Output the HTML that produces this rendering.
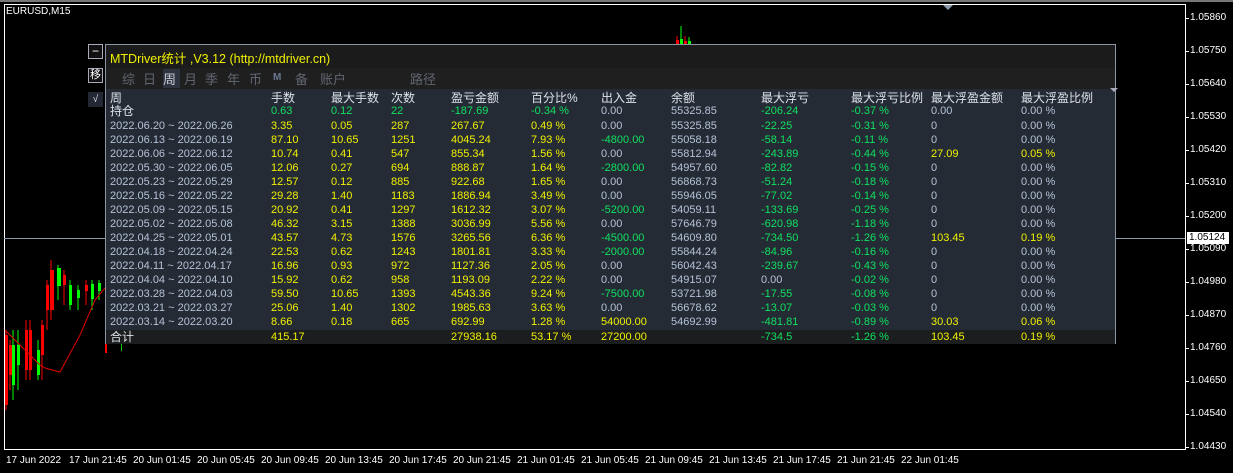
<!DOCTYPE html>
<html><head><meta charset="utf-8"><style>
*{margin:0;padding:0;box-sizing:border-box}
body{width:1233px;height:473px;background:#000;position:relative;overflow:hidden;font-family:"Liberation Sans","Noto Sans CJK SC",sans-serif;font-size:11px}
.a{position:absolute;white-space:nowrap}
.px{color:#fff;font-size:10px;left:1190px}
.tk{position:absolute;left:1185px;width:4px;height:1px;background:#fff}
.tm{color:#fff;font-size:10px;top:455px}
.r{position:absolute;left:0;width:1010px;height:13px;line-height:13px}
.r span{position:absolute;top:0}
.w{color:#b4c2d6}.y{color:#f0f000}.g{color:#10e060}.h{color:#dde3ea;font-size:12px}
.tb{position:absolute;top:24px;color:#606670;font-size:13px}
</style></head><body>
<div class="a" style="left:0;top:0;width:1233px;height:2px;background:#777"></div>
<div class="a" style="left:4px;top:4px;width:1182px;height:1px;background:#fff"></div>
<div class="a" style="left:4px;top:4px;width:1px;height:446px;background:#fff"></div>
<div class="a" style="left:1185px;top:4px;width:1px;height:446px;background:#fff"></div>
<div class="a" style="left:4px;top:449px;width:1182px;height:1px;background:#fff"></div>
<div class="a" style="left:4px;top:238px;width:1181px;height:1px;background:#8a9aaa"></div>
<div class="a" style="left:6px;top:6px;color:#fff;font-size:10px">EURUSD,M15</div>
<div class="a" style="left:943px;top:5px;width:0;height:0;border-left:5px solid transparent;border-right:5px solid transparent;border-top:5px solid #8a9aaa"></div>
<div class="tk" style="top:18px"></div><div class="a px" style="top:12px">1.05860</div>
<div class="tk" style="top:51px"></div><div class="a px" style="top:45px">1.05750</div>
<div class="tk" style="top:84px"></div><div class="a px" style="top:78px">1.05640</div>
<div class="tk" style="top:117px"></div><div class="a px" style="top:111px">1.05530</div>
<div class="tk" style="top:150px"></div><div class="a px" style="top:144px">1.05420</div>
<div class="tk" style="top:183px"></div><div class="a px" style="top:177px">1.05310</div>
<div class="tk" style="top:216px"></div><div class="a px" style="top:210px">1.05200</div>
<div class="tk" style="top:249px"></div><div class="a px" style="top:243px">1.05090</div>
<div class="a" style="left:1187px;top:232px;width:42px;height:12px;background:#fff;color:#000;font-size:10px;padding-left:2px;line-height:12px">1.05124</div>
<div class="tk" style="top:282px"></div><div class="a px" style="top:276px">1.04980</div>
<div class="tk" style="top:315px"></div><div class="a px" style="top:309px">1.04870</div>
<div class="tk" style="top:348px"></div><div class="a px" style="top:342px">1.04760</div>
<div class="tk" style="top:381px"></div><div class="a px" style="top:375px">1.04650</div>
<div class="tk" style="top:414px"></div><div class="a px" style="top:408px">1.04540</div>
<div class="tk" style="top:447px"></div><div class="a px" style="top:441px">1.04430</div>
<div class="a tm" style="left:6px">17 Jun 2022</div>
<div class="a tm" style="left:69px">17 Jun 21:45</div>
<div class="a tm" style="left:133px">20 Jun 01:45</div>
<div class="a tm" style="left:197px">20 Jun 05:45</div>
<div class="a tm" style="left:261px">20 Jun 09:45</div>
<div class="a tm" style="left:325px">20 Jun 13:45</div>
<div class="a tm" style="left:389px">20 Jun 17:45</div>
<div class="a tm" style="left:453px">20 Jun 21:45</div>
<div class="a tm" style="left:517px">21 Jun 01:45</div>
<div class="a tm" style="left:581px">21 Jun 05:45</div>
<div class="a tm" style="left:645px">21 Jun 09:45</div>
<div class="a tm" style="left:709px">21 Jun 13:45</div>
<div class="a tm" style="left:773px">21 Jun 17:45</div>
<div class="a tm" style="left:837px">21 Jun 21:45</div>
<div class="a tm" style="left:901px">22 Jun 01:45</div>
<svg class="a" style="left:0;top:0" width="110" height="450">
<line x1="6" y1="330" x2="6" y2="410" stroke="#f00"/><rect x="5" y="335" width="3" height="70" fill="#f00"/>
<line x1="10" y1="340" x2="10" y2="390" stroke="#f00"/><rect x="9" y="345" width="3" height="30" fill="#f00"/>
<line x1="13" y1="330" x2="13" y2="400" stroke="#0f0"/><rect x="12" y="345" width="3" height="40" fill="#0f0"/>
<line x1="18" y1="330" x2="18" y2="390" stroke="#0f0"/><rect x="17" y="345" width="3" height="20" fill="#0f0"/>
<line x1="26" y1="320" x2="26" y2="380" stroke="#f00"/><rect x="25" y="330" width="3" height="40" fill="#f00"/>
<line x1="30" y1="320" x2="30" y2="380" stroke="#f00"/><rect x="29" y="330" width="3" height="40" fill="#f00"/>
<line x1="38" y1="340" x2="38" y2="380" stroke="#0f0"/><rect x="37" y="350" width="3" height="25" fill="#0f0"/>
<line x1="42" y1="320" x2="42" y2="380" stroke="#f00"/><rect x="41" y="325" width="3" height="30" fill="#f00"/>
<line x1="47" y1="280" x2="47" y2="330" stroke="#f00"/><rect x="46" y="285" width="3" height="25" fill="#f00"/>
<line x1="51" y1="260" x2="51" y2="320" stroke="#f00"/><rect x="50" y="270" width="4" height="40" fill="#f00"/>
<line x1="58" y1="265" x2="58" y2="300" stroke="#0f0"/><rect x="57" y="268" width="4" height="18" fill="#0f0"/>
<line x1="64" y1="270" x2="64" y2="305" stroke="#f00"/><rect x="63" y="275" width="3" height="10" fill="#f00"/>
<line x1="70" y1="280" x2="70" y2="310" stroke="#0f0"/><rect x="69" y="285" width="3" height="20" fill="#0f0"/>
<line x1="78" y1="285" x2="78" y2="310" stroke="#0f0"/><rect x="77" y="290" width="3" height="8" fill="#0f0"/>
<line x1="86" y1="280" x2="86" y2="305" stroke="#f00"/><rect x="85" y="285" width="3" height="6" fill="#f00"/>
<line x1="92" y1="280" x2="92" y2="310" stroke="#0f0"/><rect x="91" y="284" width="3" height="15" fill="#0f0"/>
<line x1="99" y1="280" x2="99" y2="300" stroke="#0f0"/><rect x="98" y="283" width="3" height="8" fill="#0f0"/>
<polyline points="5,330 20,345 40,365 45,368 60,372 80,335 95,300 105,288" fill="none" stroke="#d00" stroke-width="1"/>
</svg>
<div class="a" style="left:105px;top:343px;width:2px;height:10px;background:#f00"></div>
<div class="a" style="left:121px;top:343px;width:1px;height:8px;background:#0c0"></div>
<svg class="a" style="left:670px;top:22px" width="30" height="23">
<line x1="11" y1="4" x2="11" y2="22" stroke="#0f0"/><rect x="10" y="17" width="3" height="6" fill="#0f0"/>
<line x1="7" y1="14" x2="7" y2="22" stroke="#f00"/><rect x="6" y="18" width="3" height="5" fill="#f00"/>
<line x1="15" y1="14" x2="15" y2="22" stroke="#f00"/><rect x="14" y="19" width="3" height="4" fill="#f00"/>
<line x1="19" y1="15" x2="19" y2="22" stroke="#0f0"/><rect x="18" y="19" width="3" height="4" fill="#0f0"/>
</svg>
<div class="a" style="left:88px;top:44px;width:15px;height:15px;border:1px solid #aab;background:#111;color:#fff;text-align:center;line-height:12px;font-size:12px">−</div>
<div class="a" style="left:88px;top:68px;width:15px;height:15px;border:1px solid #aab;background:#111;color:#fff;text-align:center;line-height:13px;font-size:11px">移</div>
<div class="a" style="left:88px;top:92px;width:15px;height:15px;background:#222833;color:#dde;text-align:center;line-height:15px;font-size:10px">√</div>
<div class="a" style="left:105px;top:44px;width:1011px;height:300px;border:1px solid #8a96a4;background:#252b35">
 <div class="a" style="left:0;top:0;width:1009px;height:23px;background:#1b1b1b"></div>
 <div class="a" style="left:0;top:23px;width:1009px;height:21px;background:#1f1f20"></div>
 <div class="a" style="left:4px;top:3px;color:#f0f000;font-size:12.5px">MTDriver统计 ,V3.12 (http://mtdriver.cn)</div>
 <div class="a" style="left:57px;top:24px;width:17px;height:19px;background:#2d3440"></div>
 <div class="tb" style="left:16px">综</div>
 <div class="tb" style="left:37px">日</div>
 <div class="tb" style="left:57px;color:#c8ccd4">周</div>
 <div class="tb" style="left:78px">月</div>
 <div class="tb" style="left:99px">季</div>
 <div class="tb" style="left:121px">年</div>
 <div class="tb" style="left:143px">币</div>
 <div class="tb" style="left:167px;font-size:10px;top:27px;color:#6a7890;font-weight:bold">M</div>
 <div class="tb" style="left:189px">备</div>
 <div class="tb" style="left:214px">账户</div>
 <div class="tb" style="left:304px">路径</div>
 <div class="a" style="left:1004px;top:43px;width:0;height:0;border-left:4px solid transparent;border-right:4px solid transparent;border-top:4px solid #aab"></div>
 <div class="a" style="left:0;top:285px;width:1009px;height:14px;background:#1c1d1f"></div>
</div>
<div class="a" style="left:105px;top:92px;width:1011px">
<div class="r h" style="top:0"><span style="left:5px">周</span><span style="left:166px">手数</span><span style="left:226px">最大手数</span><span style="left:286px">次数</span><span style="left:346px">盈亏金额</span><span style="left:426px">百分比%</span><span style="left:496px">出入金</span><span style="left:566px">余额</span><span style="left:656px">最大浮亏</span><span style="left:746px">最大浮亏比例</span><span style="left:826px">最大浮盈金额</span><span style="left:916px">最大浮盈比例</span></div>
<div class="r" style="top:13px"><span class="h" style="left:5px">持仓</span><span class="g" style="left:166px">0.63</span><span class="g" style="left:226px">0.12</span><span class="g" style="left:286px">22</span><span class="g" style="left:346px">-187.69</span><span class="g" style="left:426px">-0.34 %</span><span class="w" style="left:496px">0.00</span><span class="w" style="left:566px">55325.85</span><span class="g" style="left:656px">-206.24</span><span class="g" style="left:746px">-0.37 %</span><span class="w" style="left:826px">0.00</span><span class="w" style="left:916px">0.00 %</span></div>
</div>
<div class="a" style="left:105px;top:120px;width:1011px">
<div class="r" style="top:0"><span class="w" style="left:5px">2022.06.20 ~ 2022.06.26</span><span class="y" style="left:166px">3.35</span><span class="y" style="left:226px">0.05</span><span class="y" style="left:286px">287</span><span class="y" style="left:346px">267.67</span><span class="y" style="left:426px">0.49 %</span><span class="w" style="left:496px">0.00</span><span class="w" style="left:566px">55325.85</span><span class="g" style="left:656px">-22.25</span><span class="g" style="left:746px">-0.31 %</span><span class="w" style="left:826px">0</span><span class="w" style="left:916px">0.00 %</span></div>
<div class="r" style="top:14px"><span class="w" style="left:5px">2022.06.13 ~ 2022.06.19</span><span class="y" style="left:166px">87.10</span><span class="y" style="left:226px">10.65</span><span class="y" style="left:286px">1251</span><span class="y" style="left:346px">4045.24</span><span class="y" style="left:426px">7.93 %</span><span class="g" style="left:496px">-4800.00</span><span class="w" style="left:566px">55058.18</span><span class="g" style="left:656px">-58.14</span><span class="g" style="left:746px">-0.11 %</span><span class="w" style="left:826px">0</span><span class="w" style="left:916px">0.00 %</span></div>
<div class="r" style="top:28px"><span class="w" style="left:5px">2022.06.06 ~ 2022.06.12</span><span class="y" style="left:166px">10.74</span><span class="y" style="left:226px">0.41</span><span class="y" style="left:286px">547</span><span class="y" style="left:346px">855.34</span><span class="y" style="left:426px">1.56 %</span><span class="w" style="left:496px">0.00</span><span class="w" style="left:566px">55812.94</span><span class="g" style="left:656px">-243.89</span><span class="g" style="left:746px">-0.44 %</span><span class="y" style="left:826px">27.09</span><span class="y" style="left:916px">0.05 %</span></div>
<div class="r" style="top:42px"><span class="w" style="left:5px">2022.05.30 ~ 2022.06.05</span><span class="y" style="left:166px">12.06</span><span class="y" style="left:226px">0.27</span><span class="y" style="left:286px">694</span><span class="y" style="left:346px">888.87</span><span class="y" style="left:426px">1.64 %</span><span class="g" style="left:496px">-2800.00</span><span class="w" style="left:566px">54957.60</span><span class="g" style="left:656px">-82.82</span><span class="g" style="left:746px">-0.15 %</span><span class="w" style="left:826px">0</span><span class="w" style="left:916px">0.00 %</span></div>
<div class="r" style="top:56px"><span class="w" style="left:5px">2022.05.23 ~ 2022.05.29</span><span class="y" style="left:166px">12.57</span><span class="y" style="left:226px">0.12</span><span class="y" style="left:286px">885</span><span class="y" style="left:346px">922.68</span><span class="y" style="left:426px">1.65 %</span><span class="w" style="left:496px">0.00</span><span class="w" style="left:566px">56868.73</span><span class="g" style="left:656px">-51.24</span><span class="g" style="left:746px">-0.18 %</span><span class="w" style="left:826px">0</span><span class="w" style="left:916px">0.00 %</span></div>
<div class="r" style="top:70px"><span class="w" style="left:5px">2022.05.16 ~ 2022.05.22</span><span class="y" style="left:166px">29.28</span><span class="y" style="left:226px">1.40</span><span class="y" style="left:286px">1183</span><span class="y" style="left:346px">1886.94</span><span class="y" style="left:426px">3.49 %</span><span class="w" style="left:496px">0.00</span><span class="w" style="left:566px">55946.05</span><span class="g" style="left:656px">-77.02</span><span class="g" style="left:746px">-0.14 %</span><span class="w" style="left:826px">0</span><span class="w" style="left:916px">0.00 %</span></div>
<div class="r" style="top:84px"><span class="w" style="left:5px">2022.05.09 ~ 2022.05.15</span><span class="y" style="left:166px">20.92</span><span class="y" style="left:226px">0.41</span><span class="y" style="left:286px">1297</span><span class="y" style="left:346px">1612.32</span><span class="y" style="left:426px">3.07 %</span><span class="g" style="left:496px">-5200.00</span><span class="w" style="left:566px">54059.11</span><span class="g" style="left:656px">-133.69</span><span class="g" style="left:746px">-0.25 %</span><span class="w" style="left:826px">0</span><span class="w" style="left:916px">0.00 %</span></div>
<div class="r" style="top:98px"><span class="w" style="left:5px">2022.05.02 ~ 2022.05.08</span><span class="y" style="left:166px">46.32</span><span class="y" style="left:226px">3.15</span><span class="y" style="left:286px">1388</span><span class="y" style="left:346px">3036.99</span><span class="y" style="left:426px">5.56 %</span><span class="w" style="left:496px">0.00</span><span class="w" style="left:566px">57646.79</span><span class="g" style="left:656px">-620.98</span><span class="g" style="left:746px">-1.18 %</span><span class="w" style="left:826px">0</span><span class="w" style="left:916px">0.00 %</span></div>
<div class="r" style="top:112px"><span class="w" style="left:5px">2022.04.25 ~ 2022.05.01</span><span class="y" style="left:166px">43.57</span><span class="y" style="left:226px">4.73</span><span class="y" style="left:286px">1576</span><span class="y" style="left:346px">3265.56</span><span class="y" style="left:426px">6.36 %</span><span class="g" style="left:496px">-4500.00</span><span class="w" style="left:566px">54609.80</span><span class="g" style="left:656px">-734.50</span><span class="g" style="left:746px">-1.26 %</span><span class="y" style="left:826px">103.45</span><span class="y" style="left:916px">0.19 %</span></div>
<div class="r" style="top:126px"><span class="w" style="left:5px">2022.04.18 ~ 2022.04.24</span><span class="y" style="left:166px">22.53</span><span class="y" style="left:226px">0.62</span><span class="y" style="left:286px">1243</span><span class="y" style="left:346px">1801.81</span><span class="y" style="left:426px">3.33 %</span><span class="g" style="left:496px">-2000.00</span><span class="w" style="left:566px">55844.24</span><span class="g" style="left:656px">-84.96</span><span class="g" style="left:746px">-0.16 %</span><span class="w" style="left:826px">0</span><span class="w" style="left:916px">0.00 %</span></div>
<div class="r" style="top:140px"><span class="w" style="left:5px">2022.04.11 ~ 2022.04.17</span><span class="y" style="left:166px">16.96</span><span class="y" style="left:226px">0.93</span><span class="y" style="left:286px">972</span><span class="y" style="left:346px">1127.36</span><span class="y" style="left:426px">2.05 %</span><span class="w" style="left:496px">0.00</span><span class="w" style="left:566px">56042.43</span><span class="g" style="left:656px">-239.67</span><span class="g" style="left:746px">-0.43 %</span><span class="w" style="left:826px">0</span><span class="w" style="left:916px">0.00 %</span></div>
<div class="r" style="top:154px"><span class="w" style="left:5px">2022.04.04 ~ 2022.04.10</span><span class="y" style="left:166px">15.92</span><span class="y" style="left:226px">0.62</span><span class="y" style="left:286px">958</span><span class="y" style="left:346px">1193.09</span><span class="y" style="left:426px">2.22 %</span><span class="w" style="left:496px">0.00</span><span class="w" style="left:566px">54915.07</span><span class="w" style="left:656px">0.00</span><span class="g" style="left:746px">-0.02 %</span><span class="w" style="left:826px">0</span><span class="w" style="left:916px">0.00 %</span></div>
<div class="r" style="top:168px"><span class="w" style="left:5px">2022.03.28 ~ 2022.04.03</span><span class="y" style="left:166px">59.50</span><span class="y" style="left:226px">10.65</span><span class="y" style="left:286px">1393</span><span class="y" style="left:346px">4543.36</span><span class="y" style="left:426px">9.24 %</span><span class="g" style="left:496px">-7500.00</span><span class="w" style="left:566px">53721.98</span><span class="g" style="left:656px">-17.55</span><span class="g" style="left:746px">-0.08 %</span><span class="w" style="left:826px">0</span><span class="w" style="left:916px">0.00 %</span></div>
<div class="r" style="top:182px"><span class="w" style="left:5px">2022.03.21 ~ 2022.03.27</span><span class="y" style="left:166px">25.06</span><span class="y" style="left:226px">1.40</span><span class="y" style="left:286px">1302</span><span class="y" style="left:346px">1985.63</span><span class="y" style="left:426px">3.63 %</span><span class="w" style="left:496px">0.00</span><span class="w" style="left:566px">56678.62</span><span class="g" style="left:656px">-13.07</span><span class="g" style="left:746px">-0.03 %</span><span class="w" style="left:826px">0</span><span class="w" style="left:916px">0.00 %</span></div>
<div class="r" style="top:196px"><span class="w" style="left:5px">2022.03.14 ~ 2022.03.20</span><span class="y" style="left:166px">8.66</span><span class="y" style="left:226px">0.18</span><span class="y" style="left:286px">665</span><span class="y" style="left:346px">692.99</span><span class="y" style="left:426px">1.28 %</span><span class="y" style="left:496px">54000.00</span><span class="w" style="left:566px">54692.99</span><span class="g" style="left:656px">-481.81</span><span class="g" style="left:746px">-0.89 %</span><span class="y" style="left:826px">30.03</span><span class="y" style="left:916px">0.06 %</span></div>
<div class="r" style="top:211px"><span class="h" style="left:5px">合计</span><span class="y" style="left:166px">415.17</span><span class="y" style="left:346px">27938.16</span><span class="y" style="left:426px">53.17 %</span><span class="y" style="left:496px">27200.00</span><span class="g" style="left:656px">-734.5</span><span class="g" style="left:746px">-1.26 %</span><span class="y" style="left:826px">103.45</span><span class="y" style="left:916px">0.19 %</span></div>
</div>
</body></html>
